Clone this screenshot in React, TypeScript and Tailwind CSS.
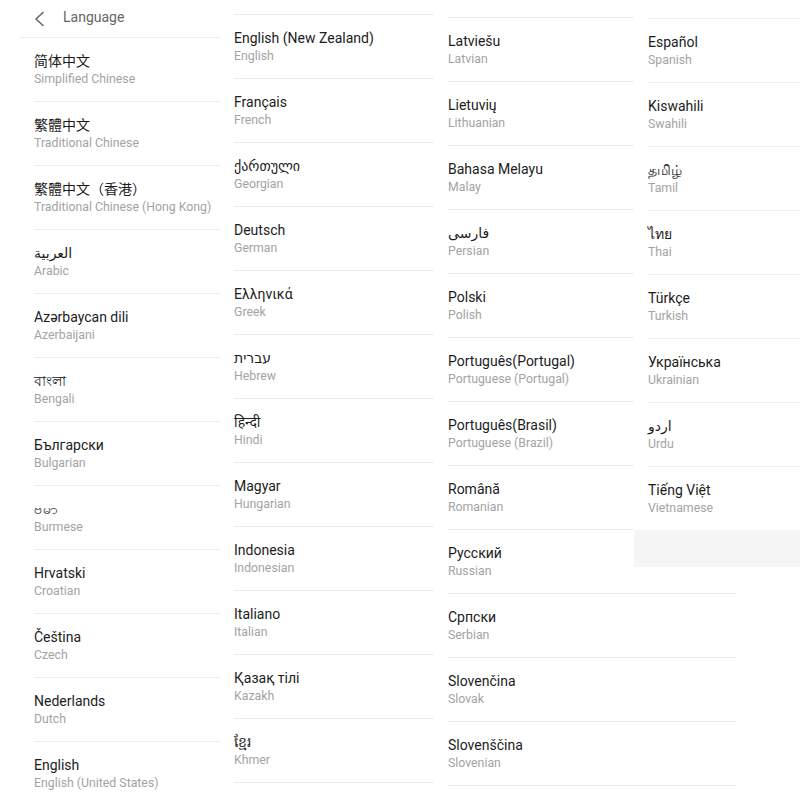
import React from "react";

type Lang = { name: string; en: string };

const col1: Lang[] = [
  { name: "简体中文", en: "Simplified Chinese" },
  { name: "繁體中文", en: "Traditional Chinese" },
  { name: "繁體中文（香港）", en: "Traditional Chinese (Hong Kong)" },
  { name: "العربية", en: "Arabic" },
  { name: "Azərbaycan dili", en: "Azerbaijani" },
  { name: "বাংলা", en: "Bengali" },
  { name: "Български", en: "Bulgarian" },
  { name: "ဗမာ", en: "Burmese" },
  { name: "Hrvatski", en: "Croatian" },
  { name: "Čeština", en: "Czech" },
  { name: "Nederlands", en: "Dutch" },
  { name: "English", en: "English (United States)" },
];

const col2: Lang[] = [
  { name: "", en: "" },
  { name: "English (New Zealand)", en: "English" },
  { name: "Français", en: "French" },
  { name: "ქართული", en: "Georgian" },
  { name: "Deutsch", en: "German" },
  { name: "Ελληνικά", en: "Greek" },
  { name: "עברית", en: "Hebrew" },
  { name: "हिन्दी", en: "Hindi" },
  { name: "Magyar", en: "Hungarian" },
  { name: "Indonesia", en: "Indonesian" },
  { name: "Italiano", en: "Italian" },
  { name: "Қазақ тілі", en: "Kazakh" },
  { name: "ខ្មែរ", en: "Khmer" },
  { name: "", en: "" },
];

const col3: Lang[] = [
  { name: "", en: "" },
  { name: "Latviešu", en: "Latvian" },
  { name: "Lietuvių", en: "Lithuanian" },
  { name: "Bahasa Melayu", en: "Malay" },
  { name: "فارسی", en: "Persian" },
  { name: "Polski", en: "Polish" },
  { name: "Português(Portugal)", en: "Portuguese (Portugal)" },
  { name: "Português(Brasil)", en: "Portuguese (Brazil)" },
  { name: "Română", en: "Romanian" },
  { name: "Русский", en: "Russian" },
  { name: "Српски", en: "Serbian" },
  { name: "Slovenčina", en: "Slovak" },
  { name: "Slovenščina", en: "Slovenian" },
  { name: "", en: "" },
];

const col4: Lang[] = [
  { name: "Svenska", en: "Swedish" },
  { name: "Español", en: "Spanish" },
  { name: "Kiswahili", en: "Swahili" },
  { name: "தமிழ்", en: "Tamil" },
  { name: "ไทย", en: "Thai" },
  { name: "Türkçe", en: "Turkish" },
  { name: "Українська", en: "Ukrainian" },
  { name: "اردو", en: "Urdu" },
  { name: "Tiếng Việt", en: "Vietnamese" },
];

function Row({ lang, top = true }: { lang: Lang; top?: boolean }) {
  return (
    <div
      className={
        top
          ? "h-[64px] border-t border-[#ececec] pt-[13px]"
          : "h-[63px] pt-[13px]"
      }
    >
      <div className="text-[14px] leading-[20px] text-[#1c1c1c] whitespace-nowrap">
        {lang.name}
      </div>
      <div className="text-[12.3px] leading-[16px] text-[#a3a3a3] whitespace-nowrap">
        {lang.en}
      </div>
    </div>
  );
}

export default function App() {
  return (
    <div
      className="w-[800px] h-[800px] overflow-hidden bg-white flex items-start"
      style={{ fontFamily: "Roboto, 'Noto Sans', 'DejaVu Sans', 'Noto Sans CJK SC', sans-serif" }}
    >
      {/* first panel with header */}
      <div className="ml-[20px] w-[200px] shrink-0">
        <div className="h-[38px] border-b border-[#ececec] flex items-center pl-[14px]">
          <svg width="12" height="16" viewBox="0 0 12 16" className="mr-[17px]">
            <polyline
              points="9.5,1 2,8 9.5,15"
              fill="none"
              stroke="#666"
              strokeWidth="1.5"
            />
          </svg>
          <span className="text-[14px] text-[#666] mt-[-3px]">Language</span>
        </div>
        <div className="pl-[14px]">
          {col1.map((l, i) => (
            <Row key={l.en} lang={l} top={i !== 0} />
          ))}
        </div>
      </div>

      <div className="w-[214px] shrink-0 pl-[14px] mt-[-50px]">
        {col2.map((l, i) => (
          <Row key={i} lang={l} />
        ))}
      </div>

      <div className="w-[302px] shrink-0 pl-[14px] mt-[-47px]">
        {col3.map((l, i) => (
          <Row key={i} lang={l} />
        ))}
      </div>

      <div className="relative z-10 w-[166px] shrink-0 ml-[-102px] mt-[-46px] bg-white">
        <div className="pl-[14px]">
          {col4.map((l, i) => (
            <Row key={i} lang={l} />
          ))}
        </div>
        <div className="h-[37px] bg-[#f5f5f5]" />
      </div>
    </div>
  );
}
